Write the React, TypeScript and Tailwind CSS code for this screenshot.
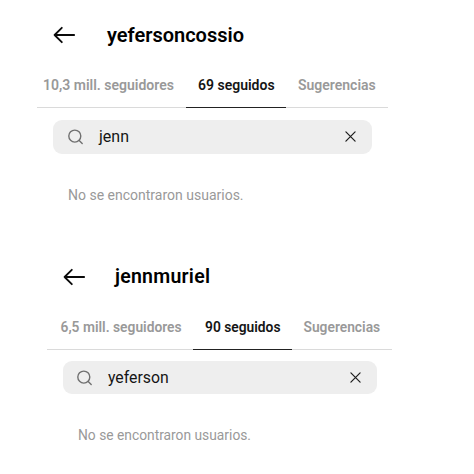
import React from 'react';

const ArrowIcon: React.FC = () => (
    <svg width="22" height="18" viewBox="0 0 22 18" fill="none" stroke="#0a0a0a" strokeWidth="1.8" strokeLinecap="round" strokeLinejoin="round">
        <path d="M21.2 9H1.6M8.8 1.8L1.6 9L8.8 16.2" />
    </svg>
);

const SearchIcon: React.FC = () => (
    <svg width="16" height="16" viewBox="0 0 16 16" fill="none" stroke="#707070" strokeWidth="1.4" strokeLinecap="round">
        <circle cx="6.8" cy="7.1" r="6" />
        <path d="M11.2 11.5L14.2 14.4" />
    </svg>
);

const CloseIcon: React.FC = () => (
    <svg width="11" height="11" viewBox="0 0 11 11" fill="none" stroke="#1c1c1c" strokeWidth="1.2" strokeLinecap="round">
        <path d="M0.9 0.9L10.1 10.1M10.1 0.9L0.9 10.1" />
    </svg>
);

interface PanelProps {
    user: string;
    followers: string;
    following: string;
    query: string;
    styles: Record<'panel' | 'header' | 'title' | 'tabs' | 'followers' | 'active' | 'suggested' | 'search' | 'query' | 'empty', string>;
}

const UserPanel: React.FC<PanelProps> = ({ user, followers, following, query, styles }) => (
    <section className={styles.panel}>
        <header className={`flex items-center ${styles.header}`}>
            <ArrowIcon />
            <h1 className={`font-semibold text-black whitespace-nowrap ${styles.title}`}>{user}</h1>
        </header>
        <nav className={`flex border-b border-[#dadada] font-semibold text-[#999] whitespace-nowrap ${styles.tabs}`}>
            <span className={styles.followers}>{followers}</span>
            <span className={`-mb-px border-b-[1.5px] border-[#222] text-[#151515] ${styles.active}`}>{following}</span>
            <span className={styles.suggested}>Sugerencias</span>
        </nav>
        <div className={`flex items-center bg-[#eeeeee] ${styles.search}`}>
            <SearchIcon />
            <span className={`flex-1 text-[#151515] ${styles.query}`}>{query}</span>
            <CloseIcon />
        </div>
        <p className={`text-[#999] whitespace-nowrap ${styles.empty}`}>No se encontraron usuarios.</p>
    </section>
);

const App: React.FC = () => (
    <main className="w-[474px] h-[474px] overflow-hidden bg-white font-['Roboto',sans-serif]">
        <UserPanel
            user="yefersoncossio"
            followers="10,3 mill. seguidores"
            following="69 seguidos"
            query="jenn"
            styles={{
                panel: 'ml-[37px] w-[351px] h-[242px] pt-5',
                header: 'h-[30px] pl-4',
                title: 'ml-8 text-[20px]',
                tabs: 'mt-[20px] h-[38px] text-[14px] leading-[30px]',
                followers: 'w-[149px] pl-1.5',
                active: 'w-[100px] pl-3',
                suggested: 'pl-3',
                search: 'mt-3 ml-[15.5px] w-[319.5px] h-[33.5px] rounded-[9px] pl-[15.5px] pr-4',
                query: 'ml-[15px] pt-px text-[16px]',
                empty: 'mt-[31px] ml-[31px] text-[14px] leading-5',
            }}
        />
        <UserPanel
            user="jennmuriel"
            followers="6,5 mill. seguidores"
            following="90 seguidos"
            query="yeferson"
            styles={{
                panel: 'ml-[47px] w-[345px] h-[232px] pt-5',
                header: 'h-[30px] pl-4',
                title: 'ml-[30px] text-[19.5px] tracking-[0.25px]',
                tabs: 'mt-[20px] h-[38px] text-[13.8px] leading-[30px]',
                followers: 'w-[146px] pl-[13.5px]',
                active: 'w-[99px] pl-3',
                suggested: 'pl-[11.5px]',
                search: 'mt-[11px] ml-[15.5px] w-[314px] h-[33px] rounded-[9px] pl-[14.5px] pr-4',
                query: 'ml-[15px] text-[15.8px]',
                empty: 'mt-[31px] ml-[31px] text-[13.8px] leading-5',
            }}
        />
    </main>
);

export default App;
